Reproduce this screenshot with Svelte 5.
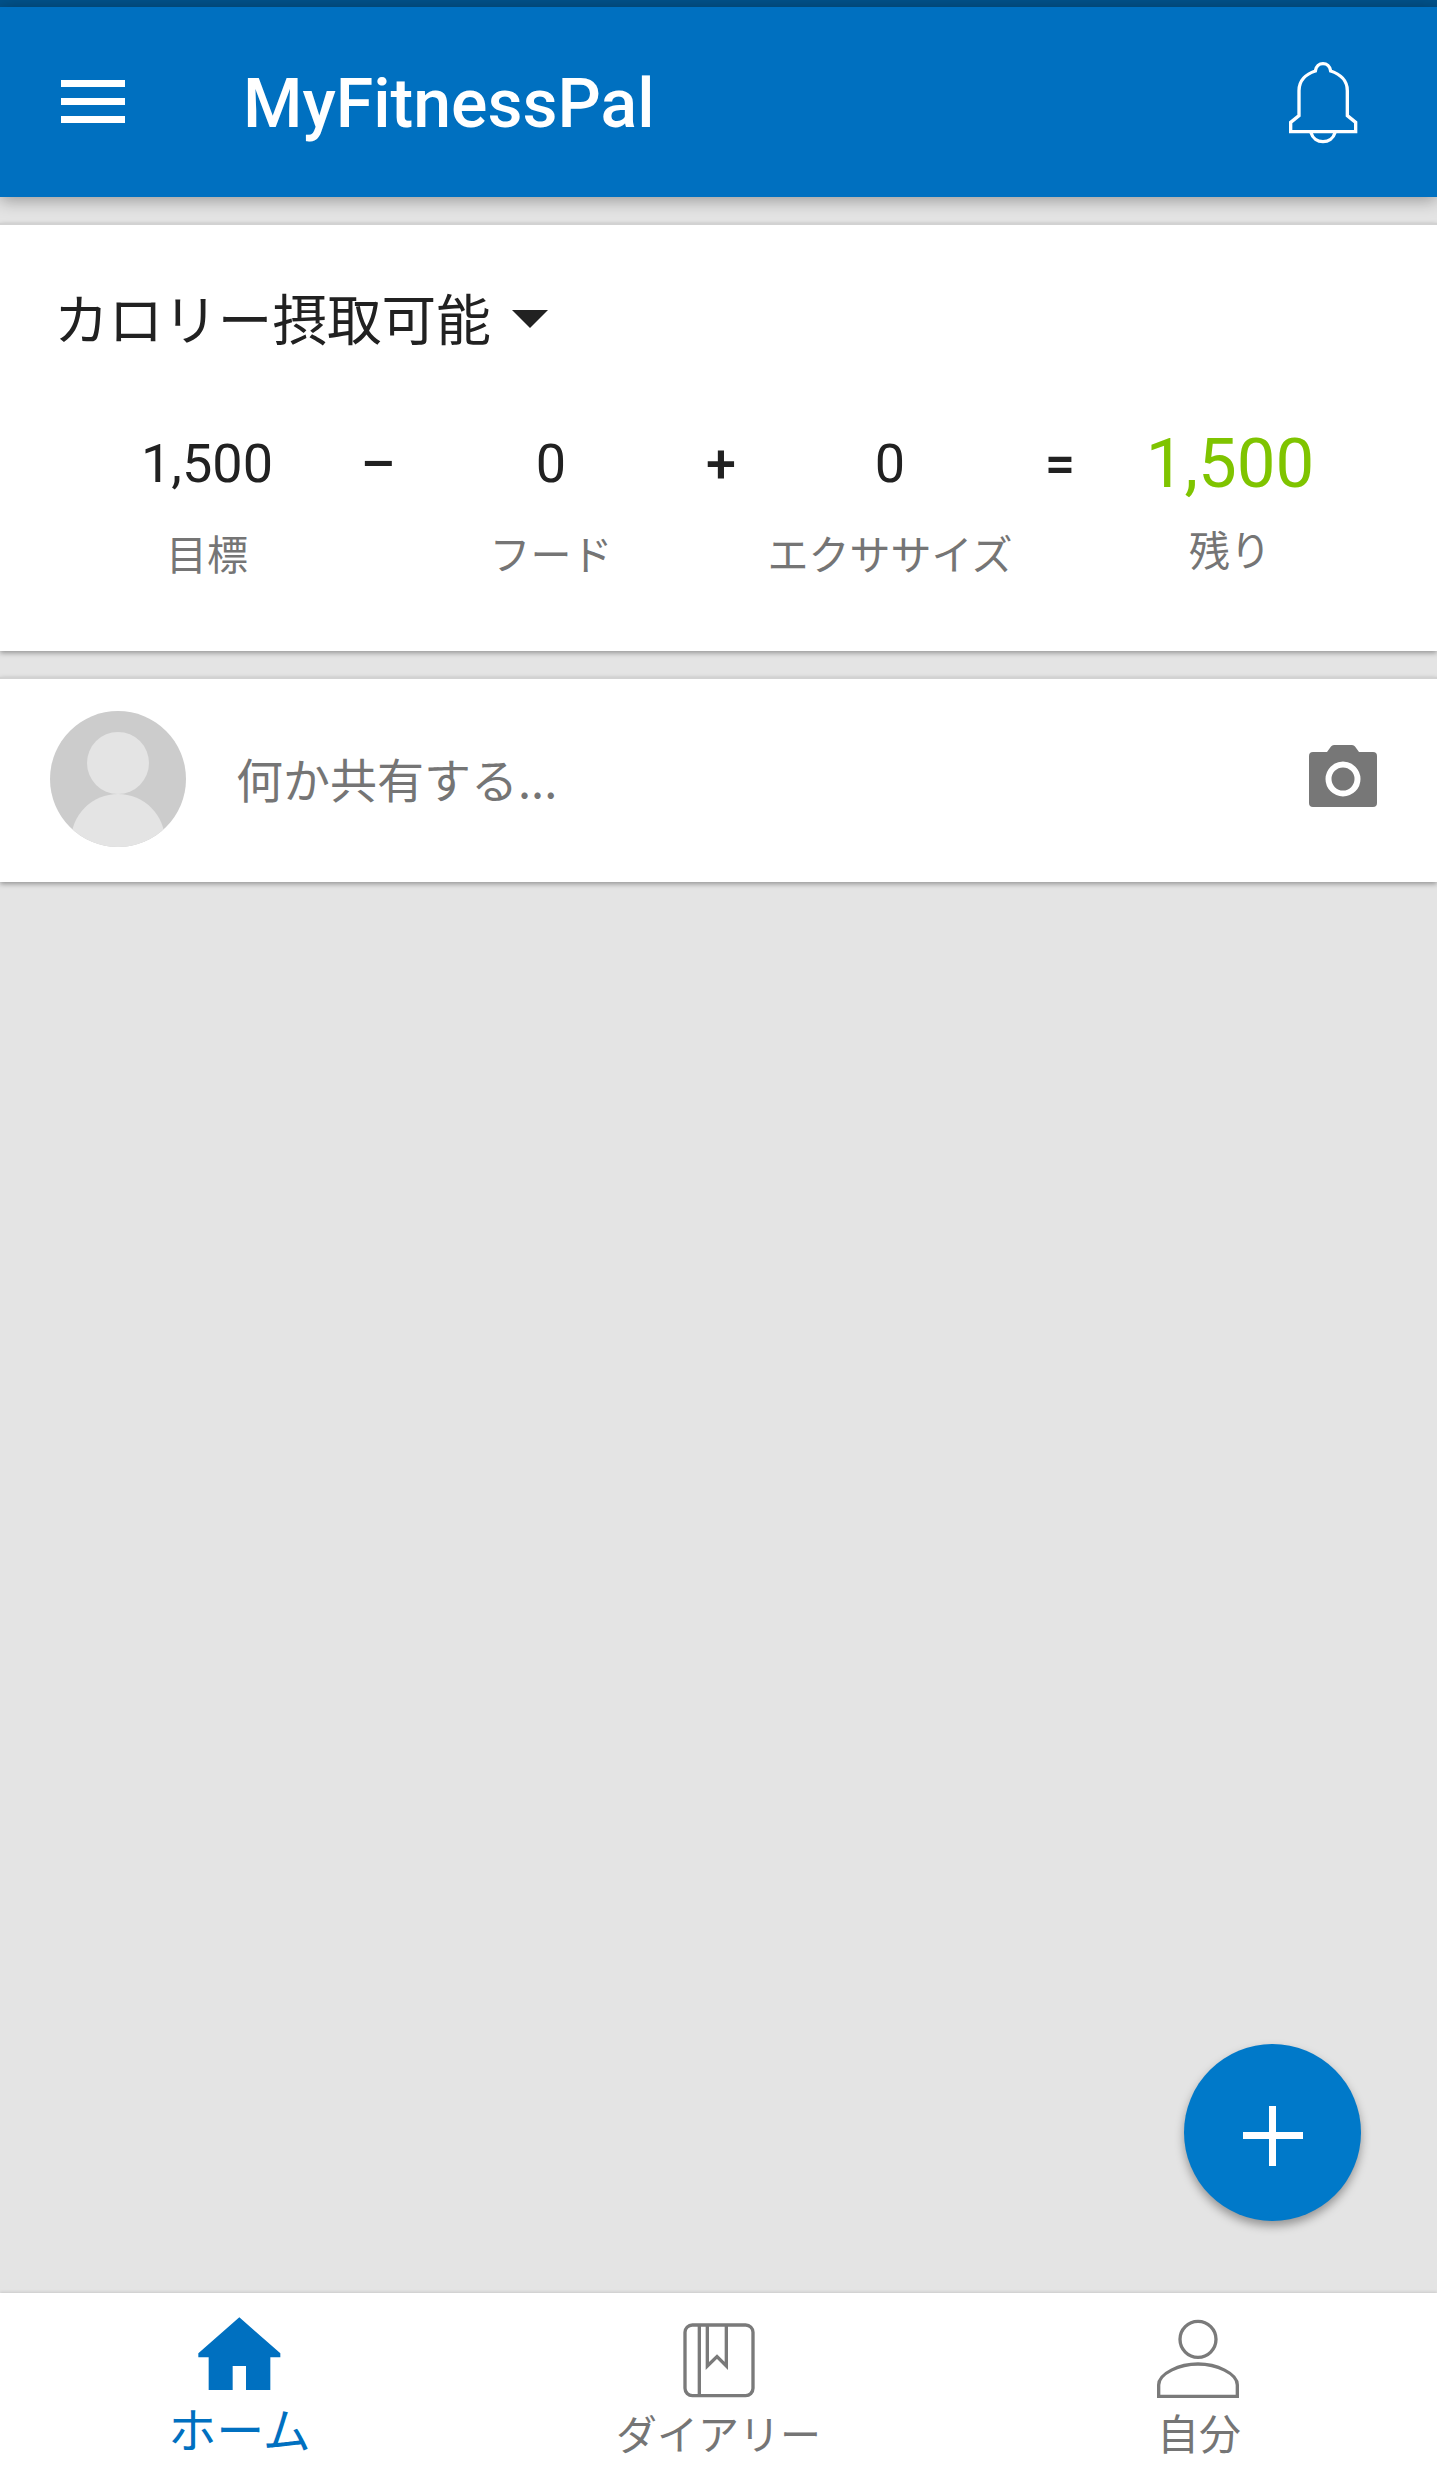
<script>
  const stats = [
    { value: '1,500', label: '目標' },
    { op: '–' },
    { value: '0', label: 'フード' },
    { op: '+' },
    { value: '0', label: 'エクササイズ' },
    { op: '=' },
    { value: '1,500', label: '残り', left: true }
  ];
</script>

<div class="screen">
  <div class="statusbar"></div>
  <header class="appbar">
    <div class="menu"><span></span><span></span><span></span></div>
    <div class="title">MyFitnessPal</div>
    <svg class="bell" viewBox="560 175 225 260" fill="none" stroke="#fff" stroke-width="10">
      <path d="M574 393V365L599 345V270C599 240 620 220 648 211C650 197 660 189 671 189C682 189 692 197 694 211C722 220 744 240 744 270V345L769 365V393Z" />
      <path d="M635 396C640 414 655 423 671 423C687 423 702 414 707 396" />
    </svg>
  </header>

  <main class="feed">
    <section class="card calories">
      <div class="card-title">カロリー摂取可能 <span class="caret"></span></div>
      <div class="stats">
        {#each stats as s}
          {#if s.op}
            <div class="op">{s.op}</div>
          {:else}
            <div class="stat" class:left={s.left}>
              <div class="value">{s.value}</div>
              <div class="label">{s.label}</div>
            </div>
          {/if}
        {/each}
      </div>
    </section>

    <section class="card share">
      <svg class="avatar" viewBox="0 0 136 136">
        <defs>
          <clipPath id="avatar-clip"><circle cx="68" cy="68" r="68" /></clipPath>
        </defs>
        <circle cx="68" cy="68" r="68" fill="#cccccc" />
        <g clip-path="url(#avatar-clip)" fill="#e4e4e4">
          <ellipse cx="68" cy="52" rx="31" ry="31" />
          <ellipse cx="68" cy="130" rx="47" ry="47" />
        </g>
      </svg>
      <div class="share-text">何か共有する...</div>
      <svg class="camera" viewBox="0 0 68 62">
        <path fill="#777777" d="M4 7H18L22 1.500Q23 0 25 0H43Q45 0 46 1.500L50 7H64Q68 7 68 11V58Q68 62 64 62H4Q0 62 0 58V11Q0 7 4 7Z" />
        <circle cx="34" cy="34" r="14.500" fill="none" stroke="#fff" stroke-width="6" />
      </svg>
    </section>

    <button class="fab" aria-label="追加">
      <span class="plus"></span>
    </button>
  </main>

  <nav class="tabs">
    <div class="tab active">
      <svg viewBox="267 120 300 270">
        <path fill="#0070c0" d="M415 142L538 250V262H508V360H435V288H395V360H323V262H292V250Z" />
      </svg>
      <span>ホーム</span>
    </div>
    <div class="tab">
      <svg viewBox="325 120 300 270" fill="none" stroke="#7a7a7a" stroke-width="10">
        <rect x="373" y="165" width="204" height="212" rx="22" />
        <path d="M416 165V377" />
        <path d="M440 165V288L469 260L497 288V165" />
      </svg>
      <span>ダイアリー</span>
    </div>
    <div class="tab">
      <svg viewBox="145 870 300 270" fill="none" stroke="#7a7a7a" stroke-width="10">
        <circle cx="295" cy="958" r="54" />
        <path d="M177 1129V1095C177 1060 240 1032 295 1032C350 1032 413 1060 413 1095V1129Z" />
      </svg>
      <span class="me">自分</span>
    </div>
  </nav>
</div>

<style>
  :global(body) {
    margin: 0;
    background: #e4e4e4;
  }

  .screen {
    display: flex;
    flex-direction: column;
    height: 2483px;
    font-family: "Noto Sans CJK JP", "Noto Sans", sans-serif;
    overflow: hidden;
  }

  .statusbar {
    height: 7px;
    background: #02528a;
  }

  .appbar {
    position: relative;
    z-index: 2;
    display: flex;
    align-items: center;
    height: 190px;
    padding: 0 76px 0 61px;
    background: #0070c0;
    box-shadow: 0 3px 16px rgba(0, 0, 0, 0.35);
    color: #fff;
  }

  .menu {
    display: flex;
    flex-direction: column;
    gap: 11px;
    width: 64px;
    margin-top: -2px;
  }

  .menu span {
    height: 7px;
    background: #fff;
  }

  .title {
    flex: 1;
    margin: 4px 0 0 118px;
    font-family: Roboto, sans-serif;
    font-size: 68px;
    font-weight: 500;
    line-height: 1;
  }

  .bell {
    width: 75px;
    height: 86.67px;
  }

  .feed {
    position: relative;
    flex: 1;
    padding-top: 26px;
  }

  .card {
    background: #fff;
    border-top: 2px solid #d2d2d2;
    box-shadow: 0 2px 5px rgba(0, 0, 0, 0.35);
  }

  .calories {
    height: 428px;
    box-sizing: border-box;
    margin-bottom: 26px;
    padding: 54px 0 0 54px;
  }

  .card-title {
    display: flex;
    align-items: center;
    gap: 9px;
    font-size: 54.6px;
    line-height: 76px;
    color: #212121;
  }

  .caret {
    width: 0;
    height: 0;
    margin: 4px 0 0 12px;
    border-left: 18px solid transparent;
    border-right: 18px solid transparent;
    border-top: 18px solid #212121;
  }

  .stats {
    display: grid;
    grid-template-columns: 171px 171px 175px 165px 173px 167px 173px;
    margin: 71px 0 0 67.5px;
  }

  .stat {
    display: flex;
    flex-direction: column;
    align-items: center;
    white-space: nowrap;
  }

  .value {
    font-family: Roboto, sans-serif;
    font-size: 54px;
    line-height: 76px;
    color: #212121;
  }

  .label {
    margin-top: 22px;
    font-size: 41px;
    line-height: 56px;
    color: #757575;
  }

  .left .value {
    font-size: 69px;
    color: #7fc400;
  }

  .left .label {
    margin-top: 18px;
  }

  .op {
    font-family: Roboto, sans-serif;
    font-size: 54px;
    font-weight: 500;
    line-height: 76px;
    text-align: center;
    color: #212121;
  }

  .share {
    display: flex;
    align-items: center;
    height: 205px;
    box-sizing: border-box;
    padding: 0 60px 4px 50px;
  }

  .avatar {
    width: 136px;
    height: 136px;
    flex-shrink: 0;
  }

  .share-text {
    flex: 1;
    margin: 0 0 3px 50px;
    font-size: 47px;
    color: #757575;
  }

  .camera {
    width: 68px;
    height: 62px;
    margin-bottom: 6px;
  }

  .fab {
    position: absolute;
    top: 1847px;
    right: 76px;
    display: flex;
    align-items: center;
    justify-content: center;
    width: 177px;
    height: 177px;
    padding: 0;
    border: none;
    border-radius: 50%;
    background: #0079c9;
    box-shadow: 0 5px 10px rgba(0, 0, 0, 0.35);
  }

  .plus {
    position: relative;
    width: 60px;
    height: 60px;
    margin: 6px 0 0 0;
    background:
      linear-gradient(#fff, #fff) center / 7px 100% no-repeat,
      linear-gradient(#fff, #fff) center / 100% 7px no-repeat;
  }

  .tabs {
    display: flex;
    height: 190px;
    background: #fff;
    box-shadow: 0 -1px 3px rgba(0, 0, 0, 0.12);
    position: relative;
  }

  .tab {
    flex: 1;
    display: flex;
    flex-direction: column;
    align-items: center;
    padding-top: 17px;
    font-size: 41px;
    line-height: 50px;
    color: #757575;
  }

  .tab svg {
    width: 100px;
    height: 90px;
  }

  .tab span {
    margin-top: 7px;
  }

  .tab .me {
    font-size: 42px;
    margin-left: 3px;
  }

  .tab.active {
    font-size: 48px;
    color: #0070c0;
  }

  .tab.active span {
    margin-top: 2px;
  }
</style>
